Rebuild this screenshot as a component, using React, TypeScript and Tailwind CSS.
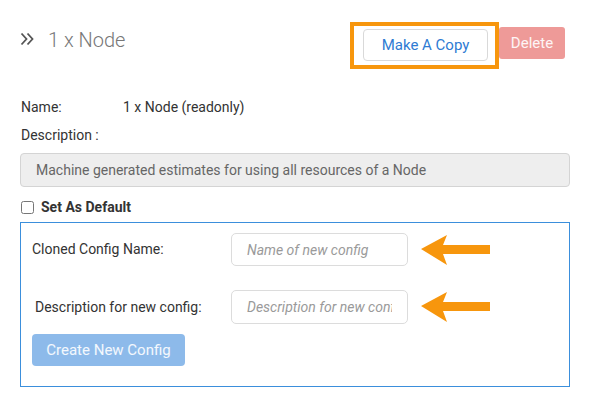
// Orange annotation arrow pointing left
function Arrow() {
  return (
    <svg width="70" height="32" viewBox="0 0 70 32" className="shrink-0 w-[70px] ml-[13px]">
      <polygon points="0,15 26,1 22,11 69,11 69,20 22,20 26,31" fill="#f7960d" />
    </svg>
  );
}

export default function App() {
  return (
    <div className="w-[590px] h-[413px] bg-white px-5 font-['Roboto',sans-serif] text-[#333] text-[14px]">
      {/* Header */}
      <div className="flex items-start justify-between pt-[22px]">
        <div className="flex items-center mt-[3px]">
          <svg width="14" height="14" viewBox="0 0 14 14" className="-mt-[3px]">
            <path d="M1.5 1.5 6.5 7 1.5 12.5M7.5 1.5 12.5 7 7.5 12.5" fill="none" stroke="#555" strokeWidth="1.8" />
          </svg>
          <span className="ml-[14px] text-[20px] font-light text-[#777]">1 x Node</span>
        </div>
        <div className="flex items-start mr-[5px]">
          <div className="border-4 border-[#f7960d] pl-[9px] pr-[7px] pt-[3px] pb-[4px]">
            <button className="w-[125px] h-[32px] rounded-[4px] border border-[#d9d9d9] bg-white text-[15px] text-[#2e7bd3]">
              Make A Copy
            </button>
          </div>
          <button className="mt-[5px] w-[66px] h-[32px] rounded-[3px] bg-[#ee9a98] text-[15px] text-white/90">
            Delete
          </button>
        </div>
      </div>

      {/* Name / description */}
      <div className="flex items-center mt-[28px] h-[20px]">
        <span className="w-[103px] pl-[1px]">Name:</span>
        <span>1 x Node (readonly)</span>
      </div>
      <div className="mt-[8px] h-[20px] flex items-center pl-[1px]">Description :</div>
      <div className="mt-[8px] h-[34px] rounded-[4px] border border-[#d4d4d4] bg-[#eeeeee] flex items-center pl-[15px] text-[#666]">
        Machine generated estimates for using all resources of a Node
      </div>

      <label className="flex items-center mt-[14px] h-[13px]">
        <input type="checkbox" className="w-[13px] h-[13px] ml-[1px] accent-[#2e7bd3]" />
        <span className="ml-[7px] font-bold text-[14px]">Set As Default</span>
      </label>

      {/* Clone form */}
      <div className="mt-[8px] h-[165px] border-[1.5px] border-[#3b8fdc] pl-[11px] pt-[10px]">
        <div className="flex items-center">
          <span className="w-[199px]">Cloned Config Name:</span>
          <input
            placeholder="Name of new config"
            className="w-[177px] h-[33px] rounded-[5px] border border-[#dcdcdc] px-[15px] italic text-[14px] placeholder:text-[#9a9a9a] outline-none"
          />
          <Arrow />
        </div>
        <div className="flex items-center mt-[24px]">
          <span className="w-[199px] pl-[3px]">Description for new config:</span>
          <input
            placeholder="Description for new config"
            className="w-[177px] h-[34px] rounded-[5px] border border-[#dcdcdc] px-[15px] italic text-[14px] placeholder:text-[#9a9a9a] outline-none"
          />
          <Arrow />
        </div>
        <button className="mt-[10px] w-[153px] h-[32px] rounded-[4px] bg-[#8dbaea] text-[15px] text-white/90">
          Create New Config
        </button>
      </div>
    </div>
  );
}
